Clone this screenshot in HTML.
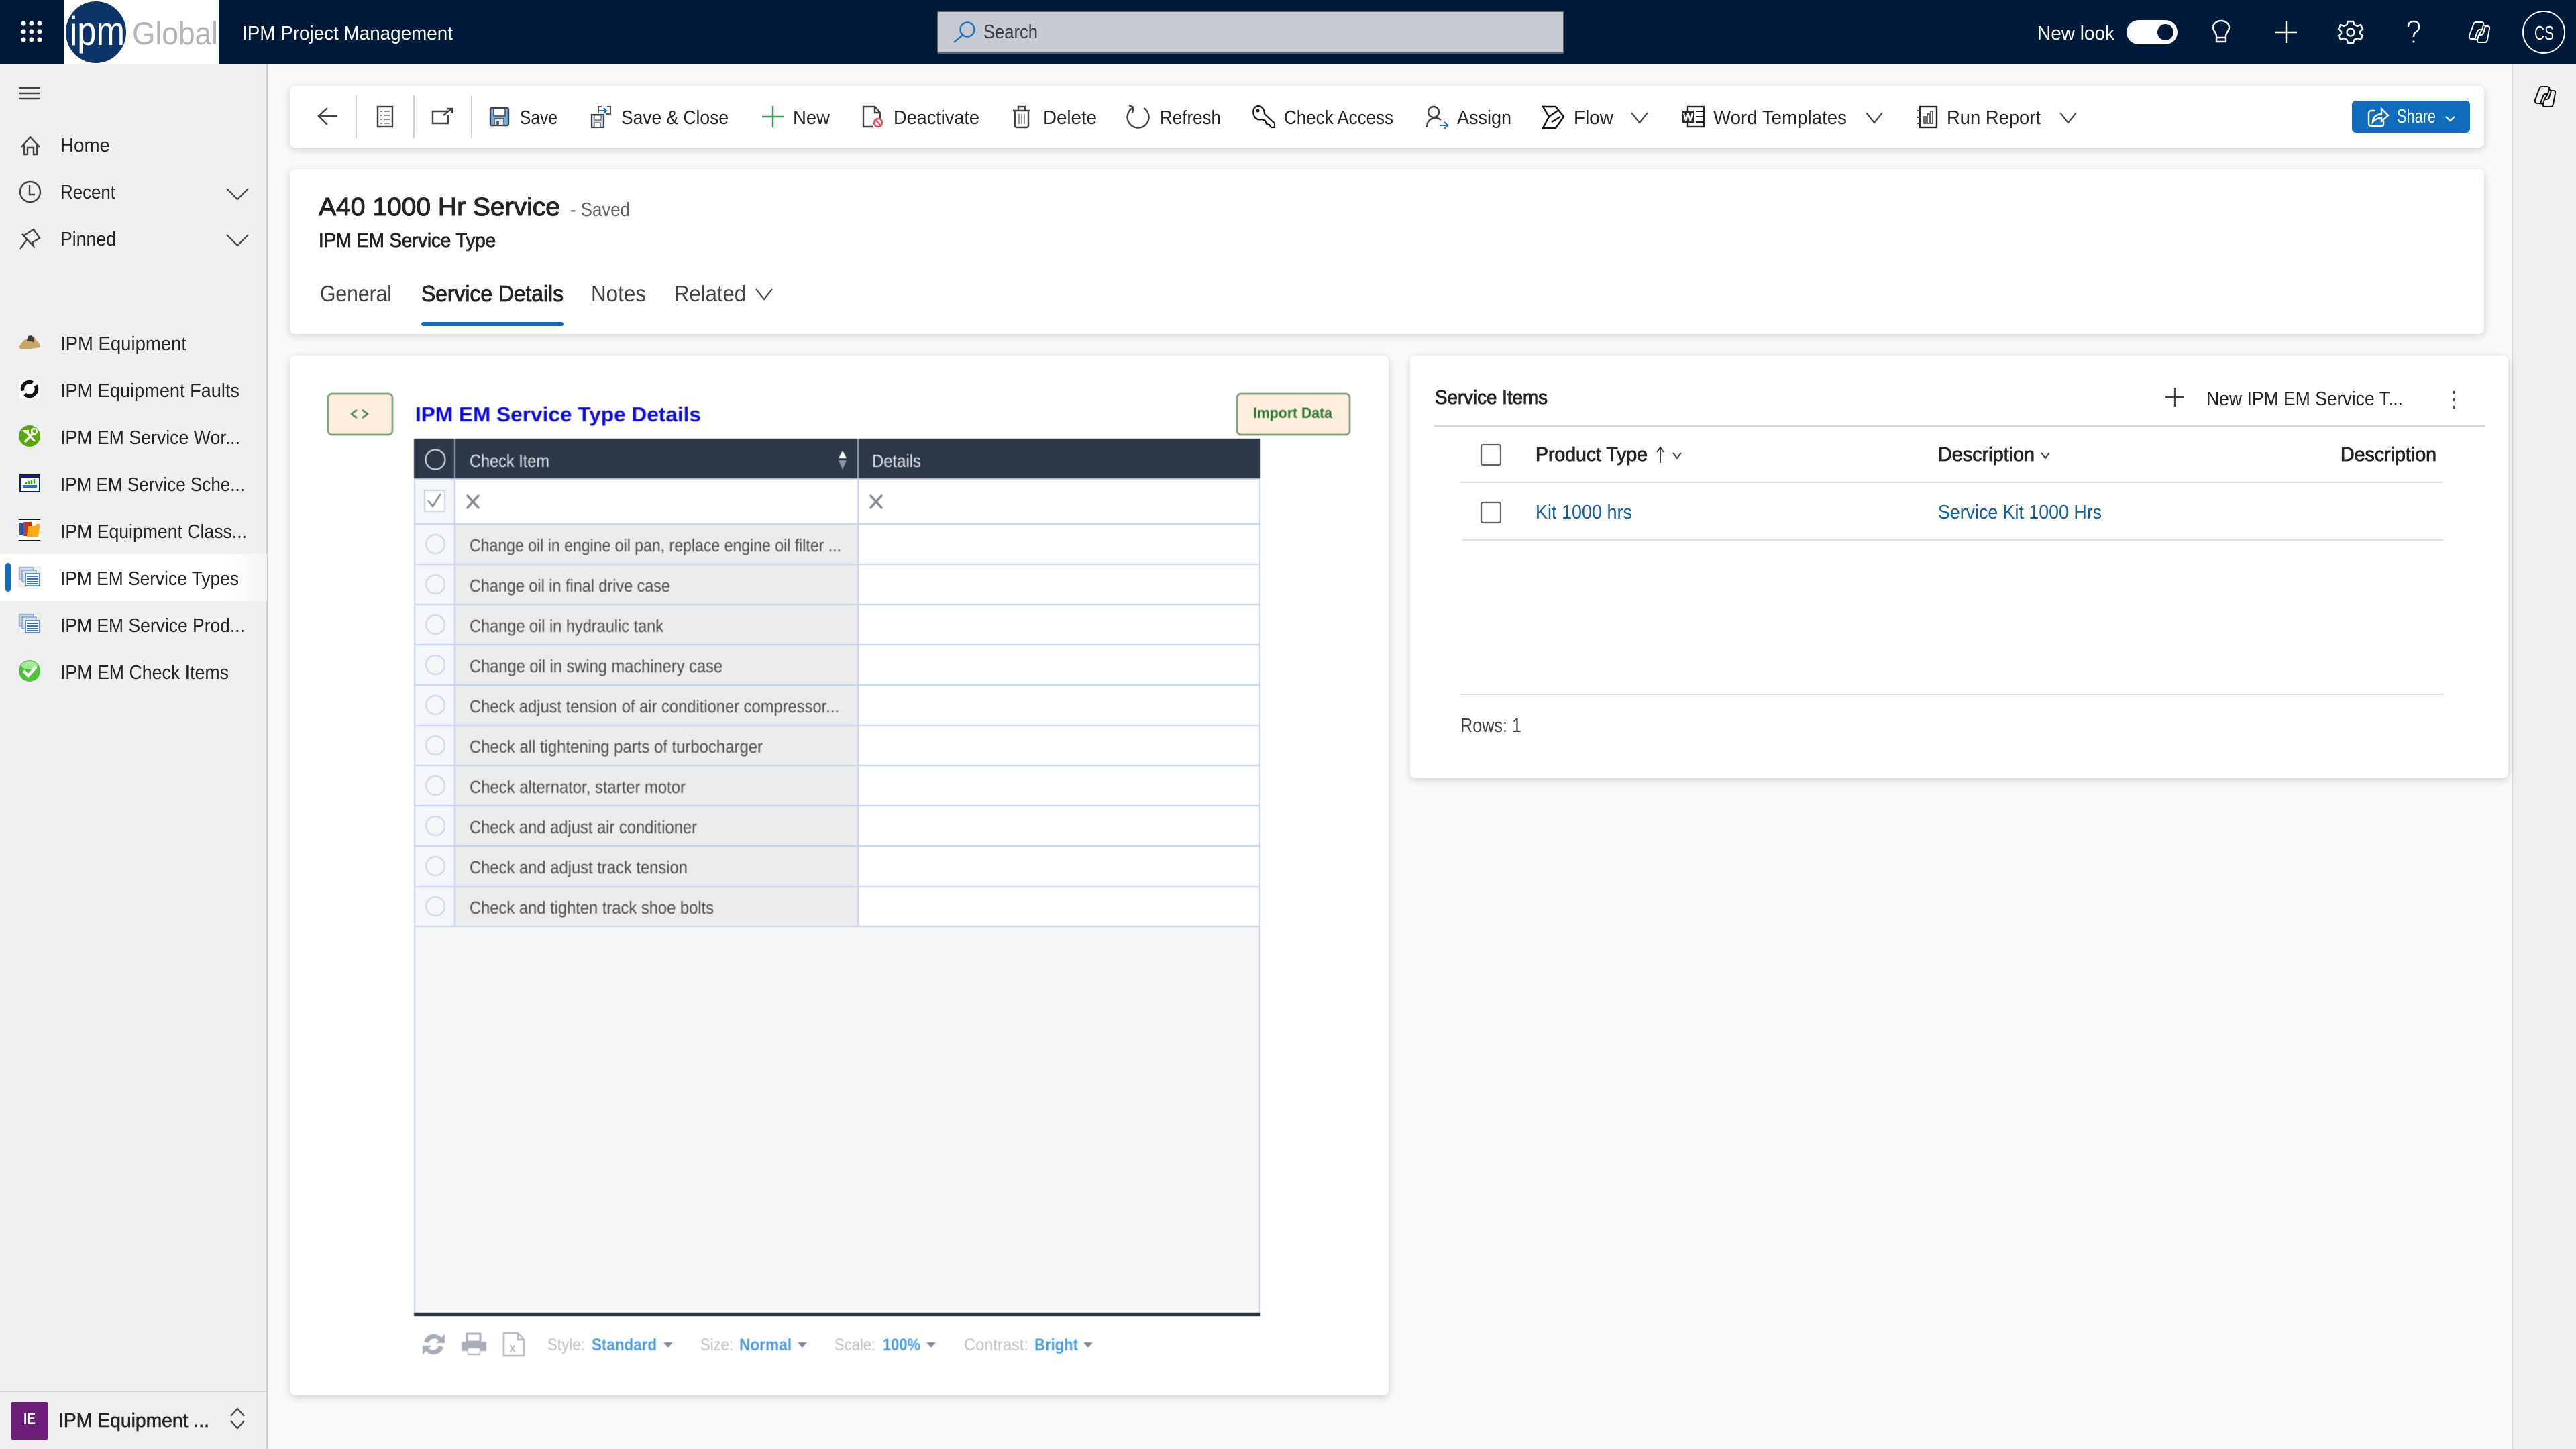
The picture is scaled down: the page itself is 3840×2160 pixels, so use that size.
<!DOCTYPE html>
<html lang="en"><head><meta charset="utf-8"><title>IPM Project Management</title>
<style>
html,body{margin:0;padding:0;width:3840px;height:2160px;overflow:hidden;background:#fafafa}
svg{display:block}
text{font-family:"Liberation Sans",Arial,sans-serif;font-size:28.8px;fill:#242424;white-space:pre}
.w{fill:#fff}
.sb{stroke:#242424;stroke-width:.85px}
.t{font-size:33.6px}
.g{font-size:25.5px;fill:#4a4a4a}
.f{font-size:25px;fill:#bdbdbd}
.fb{font-size:25px;fill:#4a9be0;font-weight:700}
.l{fill:#115ea3}
.i{fill:none;stroke:#424242;stroke-width:2.4}
.n{fill:none;stroke:#fff;stroke-width:2.4}
.c{filter:drop-shadow(0 3px 6px rgba(0,0,0,.17))}
.bl{filter:blur(.6px)}
</style></head><body>
<svg width="3840" height="2160" viewBox="0 0 3840 2160" xmlns="http://www.w3.org/2000/svg">
<defs>
<g id="layers">
<rect x="0" y="0" width="32" height="29" fill="#f2f2f2" stroke="#ddd"/>
<rect x="1" y="1" width="21" height="17" fill="#cfdcef" stroke="#6f93c4"/>
<rect x="5" y="5" width="21" height="17" fill="#dbe5f3" stroke="#5a84bd"/>
<rect x="10" y="10" width="21" height="18" fill="#fff" stroke="#3f70b0" stroke-width="1.5"/>
<path d="M12 14H29M12 18H29M12 22H29M12 25H29" stroke="#3f70b0" stroke-width="2"/>
</g>
<g id="cop" fill="none" stroke-linejoin="round">
<path d="M11 1 H19 Q23 1 22 5 L20 12 H17 Q14 12 13 15 L9 26 H5 Q0 26 1 21 L7 5 Q8 1 11 1Z"/>
<path d="M25 31 H16 Q12 31 13 27 L15 20 H18 Q21 20 22 17 L25 7 H28 Q32 7 31 11 L28 27 Q27 31 25 31Z"/>
<path d="M20 12 L15 20 M22 5 Q24 6 25 7 M9 26 Q11 27 13 27"/>
</g>
<path id="chev" d="M0 0 L12 15 L24 0" fill="none" stroke="#424242" stroke-width="2.2"/>
<path id="nchev" d="M0 0 L16 16 L32 0" fill="none" stroke="#424242" stroke-width="2.2"/>
<linearGradient id="sel" x1="0" x2="1" y1="0" y2="0"><stop offset=".85" stop-color="#fff"/><stop offset="1" stop-color="#f4f4f4"/></linearGradient>
</defs>

<!-- base -->
<rect width="3840" height="2160" fill="#fafafa"/>
<rect x="0" y="96" width="397" height="2064" fill="#efefef"/>
<rect x="397" y="96" width="3" height="2064" fill="#cdcdcd"/>
<rect x="3744" y="96" width="96" height="2064" fill="#efefef"/>
<rect x="3744" y="96" width="2" height="2064" fill="#d0d0d0"/>

<!-- header -->
<rect width="3840" height="96" fill="#021a3a"/>
<g fill="#fff">
<circle cx="35" cy="35" r="3.6"/><circle cx="47" cy="35" r="3.6"/><circle cx="59" cy="35" r="3.6"/>
<circle cx="35" cy="47" r="3.6"/><circle cx="47" cy="47" r="3.6"/><circle cx="59" cy="47" r="3.6"/>
<circle cx="35" cy="59" r="3.6"/><circle cx="47" cy="59" r="3.6"/><circle cx="59" cy="59" r="3.6"/>
</g>
<rect x="96" y="0" width="230" height="96" fill="#fff"/>
<ellipse cx="143" cy="48" rx="45" ry="46" fill="#0c3468"/>
<text x="104" y="67" textLength="82" lengthAdjust="spacingAndGlyphs" style="font-size:60px;fill:#fff">ipm</text>
<text x="197" y="66" textLength="128" lengthAdjust="spacingAndGlyphs" style="font-size:47px;fill:#b4b4b4">Global</text>
<text x="361" y="59" textLength="314" lengthAdjust="spacingAndGlyphs" class="w">IPM Project Management</text>

<rect x="1398" y="17" width="933" height="62" rx="2" fill="#c6cbd3" stroke="#5f6367" stroke-width="2"/>
<circle cx="1442" cy="44" r="10.5" fill="none" stroke="#1f70c1" stroke-width="2.4"/>
<path d="M1435 52 L1422 63" stroke="#1f70c1" stroke-width="2.4"/>
<text x="1466" y="57" textLength="81" lengthAdjust="spacingAndGlyphs" style="fill:#3c3c3c">Search</text>

<text x="3037" y="59" textLength="115" lengthAdjust="spacingAndGlyphs" class="w">New look</text>
<rect x="3170" y="30" width="76" height="36" rx="18" fill="#fff"/>
<circle cx="3228" cy="48" r="12" fill="#021a3a"/>
<path class="n" d="M3304 54 C3304 48 3299 46 3299 41 A12 10 0 0 1 3323 41 C3323 46 3318 48 3318 54 V62 H3304Z M3304 56 H3318"/>
<path class="n" d="M3392 48 H3424 M3408 32 V64"/>
<g class="n"><circle cx="3504" cy="48" r="5.5"/>
<path d="M3500 32 H3508 L3509.500 37 L3514 39 L3519 37 L3522 43 L3518 47 V50 L3522 53 L3519 59 L3514 57 L3509.500 59 L3508 64 H3500 L3498.500 59 L3494 57 L3489 59 L3486 53 L3490 50 V47 L3486 43 L3489 37 L3494 39 L3498.500 37Z"/></g>
<path class="n" d="M3590 40 Q3590 32 3598 32 Q3606 32 3606 40 Q3606 45 3601 48 Q3598 50 3598 55"/>
<circle cx="3598" cy="62" r="1.600" fill="#fff"/>
<use href="#cop" x="3680" y="32" stroke="#fff" stroke-width="2"/>
<circle cx="3792" cy="48" r="31" fill="none" stroke="#fff" stroke-width="2"/>
<text x="3778" y="59" textLength="29" lengthAdjust="spacingAndGlyphs" class="w">CS</text>

<!-- sidebar -->
<path d="M28 131 H60 M28 139 H60 M28 147 H60" stroke="#424242" stroke-width="2.4"/>
<path class="i" d="M32 219 L45 204 L59 219 M36 215 V230 H41 V220 H50 V230 H55 V215"/>
<text x="90" y="226" textLength="74" lengthAdjust="spacingAndGlyphs">Home</text>
<circle cx="45" cy="286" r="15" class="i"/><path class="i" d="M44 276 V290 H52"/>
<text x="90" y="296" textLength="82" lengthAdjust="spacingAndGlyphs">Recent</text>
<use href="#nchev" x="338" y="281"/>
<path class="i" d="M30 371 L41 356 M36 351 L50 342 L59 355 L49 361 L50 367 L33 349Z"/>
<text x="90" y="366" textLength="83" lengthAdjust="spacingAndGlyphs">Pinned</text>
<use href="#nchev" x="338" y="350"/>

<rect x="0" y="826" width="398" height="70" fill="url(#sel)"/>
<rect x="8" y="839" width="8" height="43" rx="4" fill="#0f6cbd"/>

<path d="M28 517 L36 507 L44 504 L50 501 L54 507 L60 514 L60 518 L46 520 L30 520Z" fill="#c8a565"/>
<path d="M40 508 L42 501 L47 500 L50 504 L50 510Z" fill="#3b3b38"/>
<text x="90" y="522" textLength="188" lengthAdjust="spacingAndGlyphs">IPM Equipment</text>
<rect x="29" y="566" width="30" height="28" fill="#fff"/>
<circle cx="44" cy="580" r="10.500" fill="none" stroke="#111" stroke-width="5.500" stroke-dasharray="24 6"/>
<text x="90" y="592" textLength="267" lengthAdjust="spacingAndGlyphs">IPM Equipment Faults</text>
<circle cx="44" cy="650" r="16" fill="#57a80a"/>
<path d="M37 659 L50 645" stroke="#fff" stroke-width="3.500"/><path d="M40 645 L52 658" stroke="#fff" stroke-width="3"/><path d="M34 641 H43 V646 H37Z" fill="#fff"/><circle cx="51" cy="643" r="4" fill="none" stroke="#fff" stroke-width="2.500"/>
<text x="90" y="662" textLength="268" lengthAdjust="spacingAndGlyphs">IPM EM Service Wor...</text>
<rect x="30" y="708" width="29" height="25" fill="#fff" stroke="#0a1f75" stroke-width="2"/><rect x="30" y="708" width="29" height="4" fill="#0a1f75"/>
<path d="M34 725 H55" stroke="#2a6fc0" stroke-width="4"/><path d="M39 722V718 M43 722V717 M47 722V716 M51 722V714" stroke="#37a80f" stroke-width="2.500"/>
<text x="90" y="732" textLength="275" lengthAdjust="spacingAndGlyphs">IPM EM Service Sche...</text>
<rect x="28" y="774" width="32" height="32" fill="#fff"/><path d="M28 774.500H60 M28 805.500H60" stroke="#111"/>
<rect x="29" y="779" width="12" height="19" fill="#2452c9"/><rect x="35" y="778" width="12" height="21" fill="#c93a1a"/>
<path d="M42 784 H52 L54 781 H60 L57 800 H40Z" fill="#f7ac15"/>
<text x="90" y="802" textLength="278" lengthAdjust="spacingAndGlyphs">IPM Equipment Class...</text>
<use href="#layers" x="28" y="845"/>
<text x="90" y="872" textLength="266" lengthAdjust="spacingAndGlyphs">IPM EM Service Types</text>
<use href="#layers" x="28" y="915"/>
<text x="90" y="942" textLength="275" lengthAdjust="spacingAndGlyphs">IPM EM Service Prod...</text>
<circle cx="44" cy="1000" r="16" fill="#4fc23b"/><ellipse cx="44" cy="992" rx="12" ry="6" fill="#a4e795"/>
<path d="M35 1000 L42 1007 L54 994" fill="none" stroke="#fff" stroke-width="4.500"/>
<text x="90" y="1012" textLength="251" lengthAdjust="spacingAndGlyphs">IPM EM Check Items</text>

<rect x="0" y="2073" width="397" height="2" fill="#d0d0d0"/>
<rect x="16" y="2090" width="56" height="56" rx="3" fill="#6b1d77"/>
<text x="35" y="2123" textLength="18" lengthAdjust="spacingAndGlyphs" class="w" style="font-size:24px;font-weight:700">IE</text>
<text x="87" y="2127" textLength="225" lengthAdjust="spacingAndGlyphs" class="sb" style="stroke-width:.6px">IPM Equipment ...</text>
<path d="M344 2111 L354 2100 L364 2111 M344 2118 L354 2129 L364 2118" fill="none" stroke="#424242" stroke-width="2.200"/>

<!-- command bar -->
<rect class="c" x="432" y="128" width="3271" height="92" rx="8" fill="#fff"/>
<path d="M531 142V206 M617 142V206 M703 142V206" stroke="#d0d0d0" stroke-width="2"/>
<path class="i" d="M503 173 H475 M488 161 L475 173 L488 186"/>
<rect x="563" y="159" width="22" height="30" fill="none" stroke="#424242" stroke-width="2.400"/>
<path d="M567 166H570M573 166H581M567 172H570M573 172H581M567 178H570M573 178H581M567 184H570M573 184H581" stroke="#707070" stroke-width="1.500"/>
<path class="i" d="M668 166 H645 V184 H668 V172 M661 172 L673 162 M667 162 H674 V169"/>
<rect x="731" y="161" width="27" height="26" rx="2" fill="#6bb3e6" stroke="#424242" stroke-width="2.400"/>
<rect x="736" y="162" width="17" height="11" fill="#fff" stroke="#424242" stroke-width="1.500"/>
<rect x="737" y="177" width="14" height="10" fill="#e8e8e8" stroke="#424242" stroke-width="1.500"/><rect x="740" y="180" width="4" height="7" fill="#666"/>
<text x="775" y="185" textLength="56" lengthAdjust="spacingAndGlyphs">Save</text>
<rect x="882" y="171" width="18" height="19" fill="#c5d9ea" stroke="#424242" stroke-width="2.200"/><rect x="886" y="172" width="10" height="7" fill="#fff" stroke="#424242"/><rect x="886" y="183" width="9" height="7" fill="#fff" stroke="#424242"/>
<path d="M892 168 V159 H897 M905 159 H910 V170 H903" fill="none" stroke="#424242" stroke-width="1.800"/><path d="M892 165 H904 M900 161 L904 165 L900 169" fill="none" stroke="#0f6cbd" stroke-width="2"/>
<text x="926" y="185" textLength="160" lengthAdjust="spacingAndGlyphs">Save &amp; Close</text>
<path d="M1136 174 H1168 M1152 158 V190" stroke="#25a456" stroke-width="2.400"/>
<text x="1182" y="185" textLength="55" lengthAdjust="spacingAndGlyphs">New</text>
<path class="i" d="M1301 189 H1287 V159 H1304 L1312 168 V177 M1304 159 V168 H1312"/>
<circle cx="1309" cy="183" r="6" fill="#fff" stroke="#f0505c" stroke-width="2.600"/><path d="M1305 179 L1313 187" stroke="#f0505c" stroke-width="2.400"/>
<text x="1332" y="185" textLength="128" lengthAdjust="spacingAndGlyphs">Deactivate</text>
<path class="i" d="M1510 165 H1536 M1518 165 V159 H1528 V165 M1513 165 V187 Q1513 190 1516 190 H1530 Q1533 190 1533 187 V165"/>
<path d="M1519 170V185M1523 170V185M1527 170V185" stroke="#7a7a7a" stroke-width="1.500"/>
<text x="1555" y="185" textLength="80" lengthAdjust="spacingAndGlyphs">Delete</text>
<path class="i" d="M1690 160 A16 16 0 1 0 1705 161 M1683 157 L1690 160 L1688 168" stroke-width="2.400"/>
<text x="1729" y="185" textLength="91" lengthAdjust="spacingAndGlyphs">Refresh</text>
<path d="M1869 172 Q1866 160 1875 158 Q1884 158 1885 170 L1900 184 V190 H1895 L1892 186 L1888 185 L1886 180 L1881 178 Q1873 180 1869 172Z" fill="none" stroke="#111" stroke-width="2.200"/><circle cx="1875" cy="165" r="2.500" fill="#111"/>
<text x="1914" y="185" textLength="163" lengthAdjust="spacingAndGlyphs">Check Access</text>
<circle cx="2137" cy="167" r="8" class="i"/><path class="i" d="M2127 190 C2127 180 2133 176 2140 176 C2144 176 2146 177 2148 179"/>
<path d="M2146 187 H2157 M2153 182 L2158 187 L2153 192" fill="none" stroke="#0f6cbd" stroke-width="2"/>
<text x="2172" y="185" textLength="81" lengthAdjust="spacingAndGlyphs">Assign</text>
<path d="M2300 159 H2319 L2331 174 L2319 191 H2300 L2309 174Z M2309 174 L2322 165 M2313 182 L2326 174" fill="none" stroke="#111" stroke-width="2.400"/>
<text x="2346" y="185" textLength="59" lengthAdjust="spacingAndGlyphs">Flow</text>
<use href="#chev" x="2432" y="168"/>
<rect x="2516" y="159" width="24" height="30" fill="#fff" stroke="#242424" stroke-width="2.400"/><path d="M2528 166H2540M2528 174H2540M2528 182H2540" stroke="#242424" stroke-width="2"/>
<rect x="2508" y="165" width="17" height="18" fill="#2b2b2b"/><text x="2509" y="180" textLength="15" lengthAdjust="spacingAndGlyphs" class="w" style="font-size:16px;font-weight:700">W</text>
<text x="2554" y="185" textLength="199" lengthAdjust="spacingAndGlyphs">Word Templates</text>
<use href="#chev" x="2782" y="168"/>
<rect x="2862" y="159" width="25" height="31" fill="none" stroke="#242424" stroke-width="2.400"/>
<rect x="2868" y="174" width="3" height="10" fill="none" stroke="#424242" stroke-width="1.600"/><rect x="2873" y="170" width="3" height="14" fill="none" stroke="#424242" stroke-width="1.600"/><rect x="2878" y="166" width="3" height="18" fill="none" stroke="#424242" stroke-width="1.600"/>
<path d="M2858 165H2864M2858 175H2864M2858 184H2864" stroke="#424242" stroke-width="1.800"/>
<text x="2902" y="185" textLength="140" lengthAdjust="spacingAndGlyphs">Run Report</text>
<use href="#chev" x="3071" y="168"/>
<rect x="3506" y="150" width="176" height="48" rx="6" fill="#0f6cbd"/>
<path class="n" d="M3541 165 H3535 Q3531 165 3531 169 V184 Q3531 188 3535 188 H3550 Q3553 188 3553 185 V180"/>
<path class="n" d="M3537 182 Q3538 171 3550 170 V162 L3560 172 L3550 181 V176 Q3542 176 3537 182Z" stroke-width="2"/>
<text x="3573" y="183" textLength="58" lengthAdjust="spacingAndGlyphs" class="w">Share</text>
<path d="M3646 174 L3652.500 180 L3659 174" class="n" stroke-width="1.500"/>
<use href="#cop" x="3778" y="128" stroke="#111" stroke-width="2"/>

<!-- form header card -->
<rect class="c" x="432" y="252" width="3271" height="246" rx="8" fill="#fff"/>
<text x="475" y="321" textLength="360" lengthAdjust="spacingAndGlyphs" class="sb" style="font-size:38.400px;stroke-width:1.1px">A40 1000 Hr Service</text>
<text x="850" y="322" textLength="89" lengthAdjust="spacingAndGlyphs" style="fill:#616161">- Saved</text>
<text x="475" y="368" textLength="264" lengthAdjust="spacingAndGlyphs" class="sb">IPM EM Service Type</text>
<text x="477" y="449" textLength="107" lengthAdjust="spacingAndGlyphs" class="t" style="fill:#424242">General</text>
<text x="628" y="449" textLength="212" lengthAdjust="spacingAndGlyphs" class="t sb">Service Details</text>
<text x="881" y="449" textLength="82" lengthAdjust="spacingAndGlyphs" class="t" style="fill:#424242">Notes</text>
<text x="1005" y="449" textLength="107" lengthAdjust="spacingAndGlyphs" class="t" style="fill:#424242">Related</text>
<use href="#chev" x="1127" y="431"/>
<rect x="628" y="480" width="212" height="6" rx="3" fill="#0f6cbd"/>

<!-- left card -->
<rect class="c" x="432" y="530" width="1638" height="1550" rx="8" fill="#fff"/>
<g class="bl">
<rect x="489" y="587" width="96" height="61" rx="6" fill="#fdeede" stroke="#6d9669" stroke-width="2.400"/>
<path d="M532 611 L524 617 L532 623 M540 611 L548 617 L540 623" fill="none" stroke="#3d7f58" stroke-width="2.400"/>
<text x="619" y="628" textLength="426" lengthAdjust="spacingAndGlyphs" style="font-size:31px;font-weight:700;fill:#0a0ae6">IPM EM Service Type Details</text>
<rect x="1844" y="587" width="168" height="61" rx="6" fill="#fdeede" stroke="#6d9669" stroke-width="2.400"/>
<text x="1868" y="623" textLength="118" lengthAdjust="spacingAndGlyphs" style="font-size:22.500px;font-weight:700;fill:#2a7431">Import Data</text>

<rect x="617" y="654" width="1262" height="1306" fill="#f6f6f6"/>
<rect x="617" y="714" width="1262" height="67" fill="#fff"/>
<rect x="617" y="714" width="61" height="667" fill="#f4f6f9"/>
<rect x="679" y="781" width="600" height="600" fill="#ececec"/>
<rect x="1280" y="781" width="599" height="600" fill="#fff"/>
<rect x="617" y="654" width="1262" height="60" fill="#2c3747"/>
<path d="M617 714H1879 M617 781H1879 M617 841H1879 M617 901H1879 M617 961H1879 M617 1021H1879 M617 1081H1879 M617 1141H1879 M617 1201H1879 M617 1261H1879 M617 1321H1879 M617 1381H1879" stroke="#c4d1ea" stroke-width="2"/>
<path d="M678 714V1381 M1279 714V1381" stroke="#c4d1ea" stroke-width="2"/>
<path d="M678 654V714 M1279 654V714" stroke="#b8c4d8" stroke-width="1.500"/>
<path d="M618 714V1957 M1878 714V1957" stroke="#c4d1ea" stroke-width="2"/>
<rect x="617" y="1957" width="1262" height="5" fill="#2c3747"/>
<circle cx="649" cy="685" r="14.500" fill="none" stroke="#e4e4e4" stroke-width="2"/>
<text x="700" y="696" textLength="119" lengthAdjust="spacingAndGlyphs" style="font-size:25.500px;fill:#e6e9ee">Check Item</text>
<path d="M1250 683 L1256 672 L1262 683Z" fill="#fff"/><path d="M1250 686 L1256 700 L1262 686Z" fill="#8d97a5"/>
<text x="1300" y="696" textLength="73" lengthAdjust="spacingAndGlyphs" style="font-size:25.500px;fill:#e6e9ee">Details</text>
<rect x="633" y="731" width="30" height="31" fill="#fff" stroke="#c4d1ea" stroke-width="2"/>
<path d="M638 746 L645 755 L657 736" fill="none" stroke="#7b7f85" stroke-width="2.400"/>
<path d="M696 738 L714 758 M714 738 L696 758 M1297 738 L1315 758 M1315 738 L1297 758" stroke="#7f8794" stroke-width="3.400"/>
<g fill="none" stroke="#c8d4e6" stroke-width="2">
<circle cx="649" cy="811" r="14"/><circle cx="649" cy="871" r="14"/><circle cx="649" cy="931" r="14"/><circle cx="649" cy="991" r="14"/><circle cx="649" cy="1051" r="14"/><circle cx="649" cy="1111" r="14"/><circle cx="649" cy="1171" r="14"/><circle cx="649" cy="1231" r="14"/><circle cx="649" cy="1291" r="14"/><circle cx="649" cy="1351" r="14"/>
</g>
<text x="700" y="822" textLength="554" lengthAdjust="spacingAndGlyphs" class="g">Change oil in engine oil pan, replace engine oil filter ...</text>
<text x="700" y="882" textLength="299" lengthAdjust="spacingAndGlyphs" class="g">Change oil in final drive case</text>
<text x="700" y="942" textLength="289" lengthAdjust="spacingAndGlyphs" class="g">Change oil in hydraulic tank</text>
<text x="700" y="1002" textLength="377" lengthAdjust="spacingAndGlyphs" class="g">Change oil in swing machinery case</text>
<text x="700" y="1062" textLength="551" lengthAdjust="spacingAndGlyphs" class="g">Check adjust tension of air conditioner compressor...</text>
<text x="700" y="1122" textLength="437" lengthAdjust="spacingAndGlyphs" class="g">Check all tightening parts of turbocharger</text>
<text x="700" y="1182" textLength="322" lengthAdjust="spacingAndGlyphs" class="g">Check alternator, starter motor</text>
<text x="700" y="1242" textLength="339" lengthAdjust="spacingAndGlyphs" class="g">Check and adjust air conditioner</text>
<text x="700" y="1302" textLength="325" lengthAdjust="spacingAndGlyphs" class="g">Check and adjust track tension</text>
<text x="700" y="1362" textLength="364" lengthAdjust="spacingAndGlyphs" class="g">Check and tighten track shoe bolts</text>

<!-- grid footer -->
<path d="M632 2000 A15 15 0 0 1 658 1994 L663 1988 V2002 H650 L654 1998 A9 9 0 0 0 639 2002Z M661 2008 A15 15 0 0 1 635 2014 L630 2020 V2006 H643 L639 2010 A9 9 0 0 0 654 2006Z" fill="#a8aeb8"/>
<path d="M696 1988 H716 V2000 H696Z" fill="#fff" stroke="#a8aeb8" stroke-width="3"/>
<path d="M688 2000 H725 V2014 H716 V2020 H697 V2014 H688Z" fill="#a8aeb8"/><rect x="698" y="2010" width="17" height="8" fill="#fff"/>
<path d="M751 1987 H772 L781 1997 V2021 H751Z M772 1987 V1997 H781" fill="none" stroke="#b0b6bf" stroke-width="2.400"/>
<text x="759" y="2016" style="font-size:20px;fill:#a0a6af">x</text>
<text x="816" y="2013" textLength="56" lengthAdjust="spacingAndGlyphs" class="f">Style:</text>
<text x="882" y="2013" textLength="97" lengthAdjust="spacingAndGlyphs" class="fb">Standard</text>
<text x="1044" y="2013" textLength="49" lengthAdjust="spacingAndGlyphs" class="f">Size:</text>
<text x="1102" y="2013" textLength="78" lengthAdjust="spacingAndGlyphs" class="fb">Normal</text>
<text x="1244" y="2013" textLength="61" lengthAdjust="spacingAndGlyphs" class="f">Scale:</text>
<text x="1316" y="2013" textLength="56" lengthAdjust="spacingAndGlyphs" class="fb">100%</text>
<text x="1437" y="2013" textLength="96" lengthAdjust="spacingAndGlyphs" class="f">Contrast:</text>
<text x="1542" y="2013" textLength="65" lengthAdjust="spacingAndGlyphs" class="fb">Bright</text>
<path d="M989 2001 H1003 L996 2009Z M1189 2001 H1203 L1196 2009Z M1381 2001 H1395 L1388 2009Z M1615 2001 H1629 L1622 2009Z" fill="#808894"/>
</g>

<!-- right card -->
<rect class="c" x="2102" y="530" width="1637" height="630" rx="8" fill="#fff"/>
<text x="2139" y="602" textLength="168" lengthAdjust="spacingAndGlyphs" class="sb">Service Items</text>
<path d="M3228 592 H3256 M3242 578 V606" stroke="#424242" stroke-width="2.400"/>
<text x="3289" y="604" textLength="293" lengthAdjust="spacingAndGlyphs">New IPM EM Service T...</text>
<circle cx="3658" cy="585" r="2.200" fill="#424242"/><circle cx="3658" cy="596" r="2.200" fill="#424242"/><circle cx="3658" cy="607" r="2.200" fill="#424242"/>
<rect x="2138" y="634" width="1566" height="2.500" fill="#d6d6d6"/>
<rect x="2208" y="663" width="29" height="30" rx="3" fill="#fff" stroke="#616161" stroke-width="2.200"/>
<text x="2289" y="687" textLength="167" lengthAdjust="spacingAndGlyphs" class="sb">Product Type</text>
<path d="M2475 690 V668 M2470 674 L2475 667 L2480 674" fill="none" stroke="#242424" stroke-width="1.800"/>
<path d="M2494 675 L2500 683 L2506 675" fill="none" stroke="#424242" stroke-width="2"/>
<text x="2889" y="687" textLength="144" lengthAdjust="spacingAndGlyphs" class="sb">Description</text>
<path d="M3043 675 L3049 683 L3055 675" fill="none" stroke="#424242" stroke-width="2"/>
<text x="3489" y="687" textLength="143" lengthAdjust="spacingAndGlyphs" class="sb">Description</text>
<rect x="2176" y="718" width="1466" height="2" fill="#e0e0e0"/>
<rect x="2208" y="749" width="29" height="30" rx="3" fill="#fff" stroke="#616161" stroke-width="2.200"/>
<text x="2289" y="773" textLength="144" lengthAdjust="spacingAndGlyphs" class="l">Kit 1000 hrs</text>
<text x="2889" y="773" textLength="244" lengthAdjust="spacingAndGlyphs" class="l">Service Kit 1000 Hrs</text>
<rect x="2180" y="804" width="1462" height="2" fill="#e0e0e0"/>
<rect x="2176" y="1034" width="1466" height="2" fill="#e0e0e0"/>
<text x="2177" y="1091" textLength="91" lengthAdjust="spacingAndGlyphs" style="fill:#424242">Rows: 1</text>
</svg>
</body></html>
